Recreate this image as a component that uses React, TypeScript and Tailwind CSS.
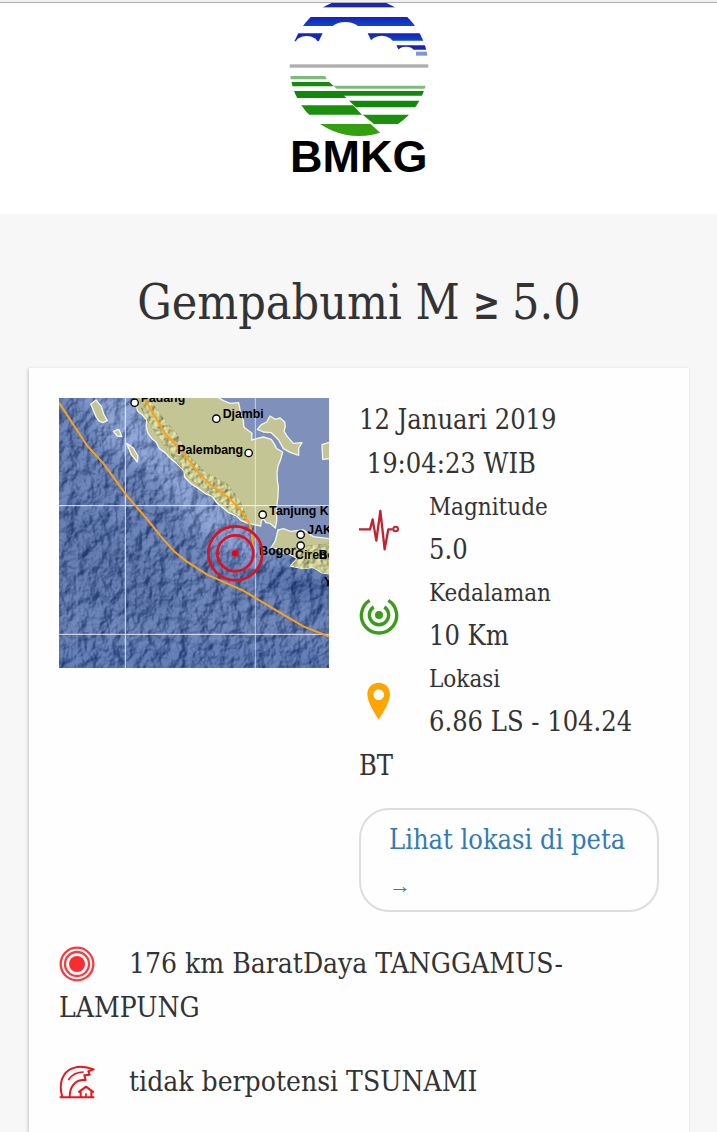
import type { ReactNode } from "react";

function Logo() {
  return (
    <svg className="h-[183px] w-[142px]" viewBox="54 9 426 549" role="img" aria-label="BMKG">
      <defs>
        <clipPath id="globe">
          <circle cx="267" cy="200" r="208" />
        </clipPath>
        <linearGradient id="sky" x1="0" y1="0" x2="0" y2="1">
          <stop offset="0" stopColor="#1a1fb4" />
          <stop offset="1" stopColor="#0a48cc" />
        </linearGradient>
      </defs>
      <g clipPath="url(#globe)">
        <rect x="54" y="-8" width="426" height="30" fill="#1a26b8" />
        <rect x="54" y="51" width="426" height="27" fill="url(#sky)" />
        <path d="M54 100H158L146 124H54Z" fill="#1726bc" />
        <path d="M293 100H480V122H304Z" fill="url(#sky)" />
        <path d="M379 136H480V149H386Z" fill="#1a22b8" />
        <rect x="438" y="155" width="42" height="12" fill="#7f92dc" />
        <g fill="#fff">
          <ellipse cx="226" cy="98" rx="48" ry="32" />
          <ellipse cx="110" cy="132" rx="34" ry="24" />
          <ellipse cx="335" cy="134" rx="36" ry="27" />
          <ellipse cx="408" cy="154" rx="24" ry="14" />
        </g>
        <rect x="54" y="193" width="426" height="10" fill="#aeaeae" />
        <path d="M54 228H166L170 238H54Z" fill="#7dbb78" />
        <path d="M54 246H178L191 259H54Z" fill="#168a0c" />
        <path d="M190 257H480V266H200Z" fill="#7dbb78" />
        <path d="M54 273H480V287H222L229 294H54Z" fill="#12880a" />
        <path d="M237 302H480V322H258Z" fill="#12880a" />
        <path d="M54 316H249L276 344H54Z" fill="#1a900c" />
        <path d="M278 344H480V372H312Z" fill="#1a900c" />
        <path d="M54 372H302L332 400V410H54Z" fill="#34a010" />
      </g>
      <text x="60" y="515" fontFamily="'Liberation Sans', Arial, sans-serif" fontWeight="bold" fontSize="135">
        BMKG
      </text>
    </svg>
  );
}

const cities = [
  { name: "Padang", x: 272, y: 37, cx: 254, cy: 38 },
  { name: "Djambi", x: 518, y: 84, cx: 499, cy: 86 },
  { name: "Palembang", x: 382, y: 192, cx: 596, cy: 189 },
  { name: "Tanjung K", x: 658, y: 375, cx: 638, cy: 374 },
  { name: "JAK", x: 772, y: 432, cx: 752, cy: 434 },
  { name: "Bogor", x: 628, y: 496, cx: 752, cy: 467 },
];

const sumatra =
  "M256 20L262 62L278 76L290 90L288 108L294 130L306 146L318 156L328 176L345 188L362 206L378 218L402 242L404 262L424 282L446 296L468 312L486 318L500 338L515 350L536 368L560 378L574 392L588 398L612 404L632 408L634 392L640 386L648 398L660 400L676 414L680 392L680 350L684 320L685 290L682 272L681 250L684 228L692 208L698 186L680 176L672 160L664 148L640 141L620 146L605 150L606 130L582 112L580 92L572 70L566 38L540 40L520 32L500 20Z";
const java =
  "M684 420L700 416L722 424L760 420L790 440L840 446V552L815 548L790 532L760 536L722 528L742 505L720 494L700 490L684 476L662 476L670 462L676 452Z";
const islands =
  "M622 118L634 104L650 96L660 78L676 88L690 84L704 96L706 108L702 124L712 140L730 160L756 158L746 174L746 196L722 188L700 176L686 150L664 128L640 126ZM816 164L840 156V206L818 208ZM122 42L138 30L154 50L162 74L172 92L158 98L146 92L138 80ZM190 124L206 118L216 140L202 138ZM230 160L250 174L264 198L262 216L244 194Z";

function QuakeMap() {
  return (
    <svg className="block w-full" viewBox="27 24 810 810" role="img" aria-label="Peta lokasi gempabumi">
      <defs>
        <filter id="seabed" x="0" y="0" width="1" height="1" colorInterpolationFilters="sRGB">
          <feTurbulence type="fractalNoise" baseFrequency="0.03 0.024" numOctaves="4" seed="11" />
          <feColorMatrix values="0 0 0 0 0  0 0 0 0 0  0 0 0 0 0  1 0 0 0 0" />
          <feDiffuseLighting surfaceScale="18" diffuseConstant="1" lightingColor="#fff" result="light">
            <feDistantLight azimuth="215" elevation="50" />
          </feDiffuseLighting>
          <feComposite in="SourceGraphic" in2="light" operator="arithmetic" k1="0" k2="1" k3="0.27" k4="-0.18" />
        </filter>
        <filter id="relief" x="0" y="0" width="1" height="1" colorInterpolationFilters="sRGB">
          <feTurbulence type="fractalNoise" baseFrequency="0.06" numOctaves="2" seed="3" />
          <feDiffuseLighting surfaceScale="7" diffuseConstant="1" lightingColor="#fff" result="light">
            <feDistantLight azimuth="215" elevation="50" />
          </feDiffuseLighting>
          <feComposite in="SourceGraphic" in2="light" operator="arithmetic" k1="0.8" k2="0.42" k3="0" k4="0" result="lit" />
          <feComposite in="lit" in2="SourceAlpha" operator="in" />
        </filter>
        <filter id="soft">
          <feGaussianBlur stdDeviation="24" />
        </filter>
        <clipPath id="land">
          <path d={sumatra} />
          <path d={java} />
        </clipPath>
      </defs>

      <g filter="url(#seabed)">
        <rect x="27" y="24" width="810" height="810" fill="#5a72a6" />
        <g filter="url(#soft)">
          <path d="M100 0L300 20L420 260L620 420L700 500L600 520L440 420L300 250L180 180Z" fill="#7c92c2" />
          <path d="M600 530L837 590V640L740 610Z" fill="#38528c" />
          <path d="M27 340L220 420L340 540L420 640L300 700L27 600Z" fill="#51699c" />
          <path d="M27 780H837V834H27Z" fill="#4c67a0" />
        </g>
      </g>
      <path d="M480 20H840V450L780 440L690 412L650 480L612 450V400Z" fill="#7f91bb" />
      <path d="M81 470V834" stroke="#7c90c4" strokeWidth="8" opacity="0.5" />

      <g fill="#c3c595" stroke="#f4f5ee" strokeWidth="4" strokeLinejoin="round">
        <path d={sumatra} />
        <path d={java} />
        <path d={islands} />
      </g>
      <g clipPath="url(#land)">
        <g filter="url(#relief)" fill="#c0c18a">
          <path d="M256 20L300 30L340 84L380 130L420 200L470 248L530 280L570 330L600 400L560 378L486 318L412 262L345 170L290 90Z" />
          <path d="M700 480L740 470L837 460V552L722 528L742 505Z" />
        </g>
      </g>

      <g stroke="#fff" strokeWidth="3" opacity="0.85">
        <path d="M226 24V834M27 347H837M27 733H837" />
        <path d="M616 24V834" opacity="0.7" />
      </g>
      <g fill="none" stroke="#f9a11b" strokeWidth="6">
        <path d="M27 38L112 168L160 220L228 314L290 386L330 436L372 484L410 514L470 553L580 602L680 662L760 709L837 740" />
        <path d="M282 24L348 134L400 190L450 254L490 292L535 322L568 356L598 400L606 430L609 468" />
      </g>

      <g fontFamily="'Liberation Sans', Arial, sans-serif" fontWeight="bold" fontSize="37">
        {cities.map((city) => (
          <g key={city.name}>
            <circle cx={city.cx} cy={city.cy} r="11" fill="#fff" stroke="#000" strokeWidth="4" />
            <text x={city.x} y={city.y}>{city.name}</text>
          </g>
        ))}
        <text x="735" y="508">Cireb</text>
        <text x="806" y="508">Bo</text>
        <text x="822" y="588">Y</text>
      </g>

      <g fill="none" stroke="#dd1122" strokeWidth="8">
        <circle cx="556" cy="490" r="81" />
        <circle cx="556" cy="490" r="54" />
      </g>
      <circle cx="556" cy="490" r="10" fill="#f00010" />
    </svg>
  );
}

function MagnitudeIcon() {
  return (
    <svg className="size-10 overflow-visible" viewBox="27 357 120 120" fill="none" stroke="#be2532" strokeWidth="7" strokeLinejoin="round" aria-hidden="true">
      <path d="M27 418H60L68 388L79 452L91 363L104 478L115 418H128" />
      <circle cx="137" cy="417" r="7" strokeWidth="6" />
    </svg>
  );
}

function DepthIcon() {
  return (
    <svg className="size-10" viewBox="27 44 120 120" fill="none" stroke="#3b9c1c" strokeWidth="10" aria-hidden="true">
      <path d="M59 60A53 53 0 1 0 115 60" />
      <path d="M71 80A29 29 0 1 0 103 80" />
      <circle cx="87" cy="104" r="12" fill="#3b9c1c" stroke="none" />
    </svg>
  );
}

function PinIcon() {
  return (
    <svg className="size-10" viewBox="27 303 120 120" aria-hidden="true">
      <path
        fill="#ffa500"
        fillRule="evenodd"
        d="M86 308C66 308 52 323 52 342C52 368 76 402 86 419C96 402 120 368 120 342C120 323 106 308 86 308ZM86 328A16 16 0 1 1 86 360A16 16 0 1 1 86 328Z"
      />
    </svg>
  );
}

function EpicenterIcon() {
  return (
    <svg className="size-9" viewBox="27 32 108 108" fill="none" stroke="#fb3a3e" aria-hidden="true">
      <circle cx="81" cy="86" r="49" strokeWidth="7" />
      <circle cx="81" cy="86" r="36" strokeWidth="7" />
      <circle cx="81" cy="86" r="24" fill="#fb2c32" stroke="none" />
    </svg>
  );
}

function TsunamiIcon() {
  return (
    <svg className="size-9" viewBox="28 386 108 108" fill="none" stroke="#e8161c" strokeWidth="6" strokeLinejoin="round" aria-hidden="true">
      <path d="M30 486H134" />
      <path d="M38 485C28 452 34 420 58 404C80 390 106 392 132 402L116 408L120 418L104 420L108 434L98 434C76 436 60 454 60 485" />
      <path d="M56 434C66 418 82 410 102 410" strokeWidth="5" />
      <path d="M86 471L109 454L132 471" />
      <path d="M93 468V485M125 468V485" />
      <path d="M109 485V474" strokeWidth="5" />
    </svg>
  );
}

const details = [
  { label: "Magnitude", value: "5.0", icon: <MagnitudeIcon /> },
  { label: "Kedalaman", value: "10 Km", icon: <DepthIcon /> },
  { label: "Lokasi", value: "6.86 LS - 104.24 BT", icon: <PinIcon /> },
];

function Note({ icon, children }: { icon: ReactNode; children: ReactNode }) {
  return (
    <p className="mt-[30px] text-[28px]">
      <span className="float-left mr-[34px] flex h-11 items-center">{icon}</span>
      {children}
    </p>
  );
}

export default function App() {
  return (
    <div className="bg-[#f7f7f7] font-['DejaVu_Serif_Condensed','DejaVu_Serif',serif] text-[#333]">
      <div className="h-[3px] border-b border-[#b0b0b0] bg-[#f0f0f0]" />
      <header className="flex justify-center bg-white pb-7">
        <Logo />
      </header>

      <main className="pt-14 pr-7 pl-[29px]">
        <h1 className="mb-[34px] text-center text-5xl leading-[64px]">
          Gempabumi M <span className="font-['Roboto',sans-serif] leading-none font-medium">≥</span> 5.0
        </h1>

        <section className="bg-[#fefefe] px-[30px] pt-[30px] pb-7 text-[27px] leading-[44px] shadow-[-1px_1px_3px_rgba(0,0,0,0.2)]">
          <div className="grid grid-cols-[9fr_10fr] items-start gap-[30px]">
            <QuakeMap />
            <div>
              <p>
                12 Januari 2019
                <br />
                &nbsp;19:04:23 WIB
              </p>
              <ul>
                {details.map((item) => (
                  <li key={item.label}>
                    <span className="float-left mr-[30px] flex h-[86px] items-center">{item.icon}</span>
                    <div className="text-2xl leading-[42px]">{item.label}</div>
                    <div>{item.value}</div>
                  </li>
                ))}
              </ul>
              <a
                href="#peta"
                className="mt-5 block rounded-[30px] border-2 border-[#ddd] px-7 pt-2 pb-1 text-[#337ab7]"
              >
                Lihat lokasi di peta{" "}
                <span className="font-['Liberation_Serif',serif] text-[22px] leading-none">→</span>
              </a>
            </div>
          </div>

          <Note icon={<EpicenterIcon />}>176 km BaratDaya TANGGAMUS-LAMPUNG</Note>
          <Note icon={<TsunamiIcon />}>tidak berpotensi TSUNAMI</Note>
        </section>
      </main>
    </div>
  );
}
